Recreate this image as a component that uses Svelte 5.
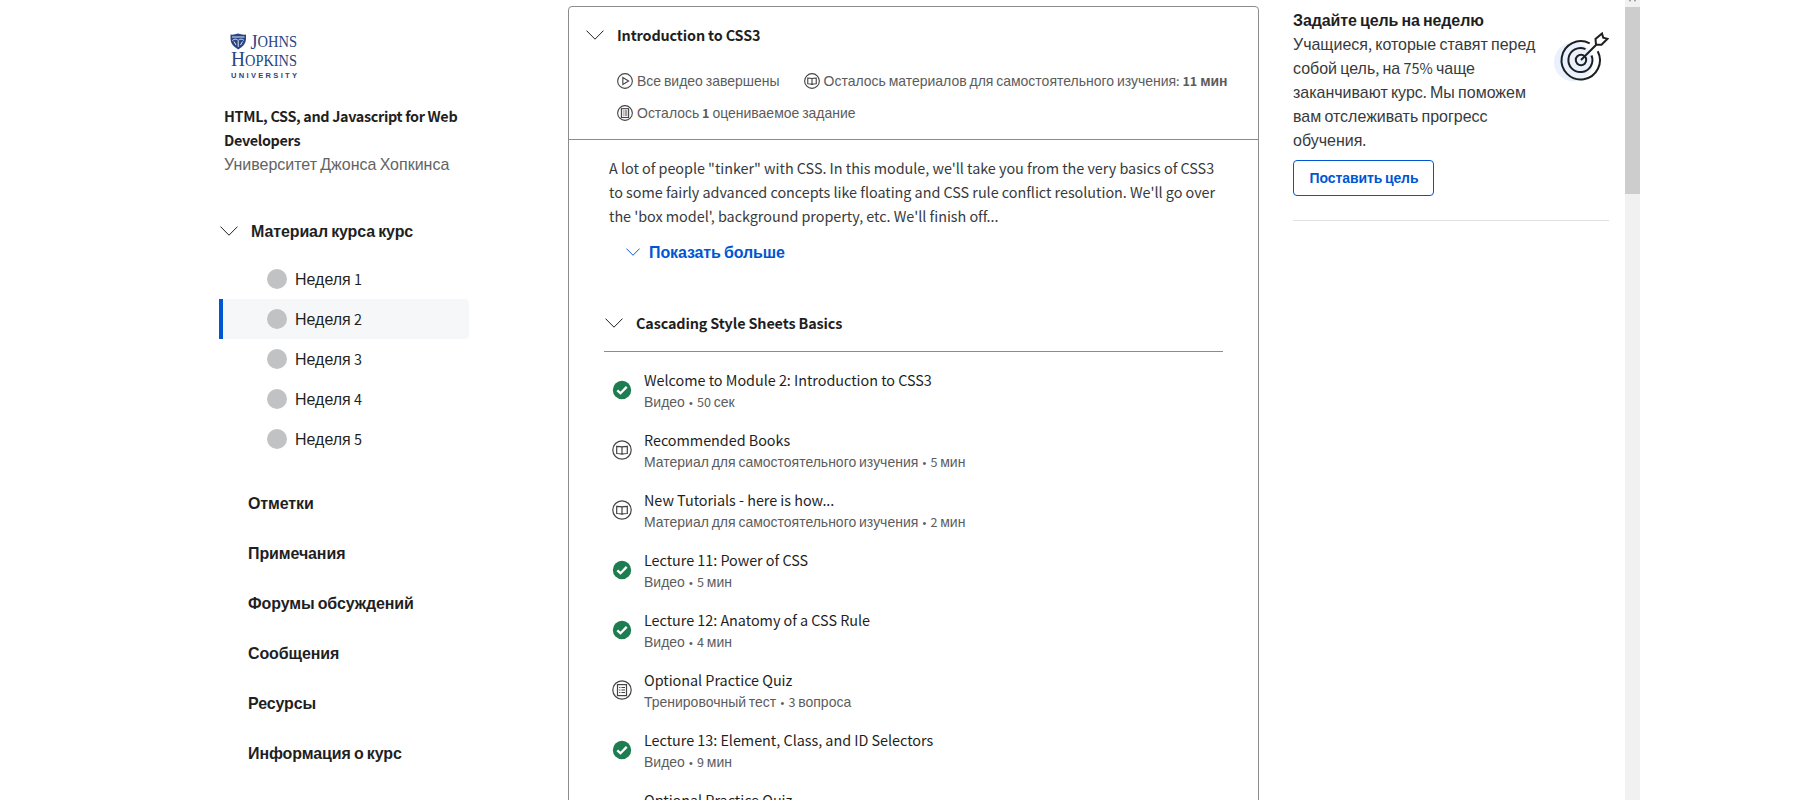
<script>
  const weeks = ['Неделя 1', 'Неделя 2', 'Неделя 3', 'Неделя 4', 'Неделя 5'];
  const activeWeek = 1;
  const links = ['Отметки', 'Примечания', 'Форумы обсуждений', 'Сообщения', 'Ресурсы', 'Информация о курс'];
  const reading = 'Материал для самостоятельного изучения';
  const items = [
    { icon: 'check', title: 'Welcome to Module 2: Introduction to CSS3', meta: 'Видео • 50 сек' },
    { icon: 'book', title: 'Recommended Books', meta: reading + ' • 5 мин' },
    { icon: 'book', title: 'New Tutorials - here is how...', meta: reading + ' • 2 мин' },
    { icon: 'check', title: 'Lecture 11: Power of CSS', meta: 'Видео • 5 мин' },
    { icon: 'check', title: 'Lecture 12: Anatomy of a CSS Rule', meta: 'Видео • 4 мин' },
    { icon: 'quiz', title: 'Optional Practice Quiz', meta: 'Тренировочный тест • 3 вопроса' },
    { icon: 'check', title: 'Lecture 13: Element, Class, and ID Selectors', meta: 'Видео • 9 мин' },
    { icon: 'quiz', title: 'Optional Practice Quiz', meta: '' }
  ];
  const description = [
    'A lot of people "tinker" with CSS. In this module, we\'ll take you from the very basics of CSS3',
    'to some fairly advanced concepts like floating and CSS rule conflict resolution. We\'ll go over',
    'the \'box model\', background property, etc. We\'ll finish off...'
  ];
  const goal = [
    'Учащиеся, которые ставят перед',
    'собой цель, на 75% чаще',
    'заканчивают курс. Мы поможем',
    'вам отслеживать прогресс',
    'обучения.'
  ];
  // Cyrillic runs and bullets use a different face from Latin letters, digits and punctuation
  const runs = (s) => s.split(/([А-Яа-яЁё]+|•)/).filter(Boolean);
  const isCyr = (s) => /[А-Яа-яЁё]/.test(s);
</script>

{#snippet t(s)}{#each runs(s) as r}{#if isCyr(r)}<span class="cy">{r}</span>{:else if r === '•'}<span class="cy dot">{r}</span>{:else}{r}{/if}{/each}{/snippet}

{#snippet chevron(w)}
  <svg class="chev" width={w} height={w / 2 + 1} viewBox="0 0 18 10" fill="none" stroke="currentColor" stroke-width={w < 18 ? 1.25 : 1}><path d="M.5 .6 9 9.2 17.5 .6" /></svg>
{/snippet}

{#snippet icon(kind, size)}
  <svg class="icon" width={size} height={size} viewBox="0 0 20 20" fill="none" stroke="#444" stroke-width={size < 20 ? 1.4 : 1.2}>
    {#if kind === 'check'}
      <circle cx="10" cy="10" r="9.2" fill="#1d7c50" stroke="none" />
      <path d="M5.3 10.3 8.5 13.2 14.7 6.9" stroke="#fff" stroke-width="2.3" />
    {:else}
      <circle cx="10" cy="10" r="9.2" />
      {#if kind === 'book'}
        <path d="M10 6.9C8.6 6.3 6.5 6.3 4.7 6.3V13.5C6.5 13.5 8.6 13.5 10 14.3C11.4 13.5 13.5 13.5 15.3 13.5V6.3C13.5 6.3 11.4 6.3 10 6.9ZV14.3" />
      {:else if kind === 'play'}
        <path d="M7.3 5.6V14.4L14.5 10Z" />
      {:else}
        <rect x="5.5" y="4.6" width="9" height="11" />
        <path d="M7.2 7.5H8.4M9.4 7.5H13M7.2 10H8.4M9.4 10H13M7.2 12.5H8.4M9.4 12.5H13" />
      {/if}
    {/if}
  </svg>
{/snippet}

<div class="page">
  <nav class="side">
    <svg class="logo" width="76" height="52" viewBox="0 0 76 52" fill="#2a4584">
      <path d="M1.5 5.5Q5 6 9 4.5Q13 6 17 5.5V10Q17 16 9.2 20.5Q1.5 16 1.5 10Z" />
      <path d="M3 8H15.5M3.3 11.5C6 9.5 7.5 10 9.2 11.5C11 10 13 9.5 15 11.5M5 12.5 7 16M13.500 12.5 11.5 16M9.2 12V18" fill="none" stroke="#dfe5f2" stroke-width="1" />
      <text x="21.5" y="20" font-size="20" textLength="7" lengthAdjust="spacingAndGlyphs">J</text>
      <text x="28.5" y="18.2" font-size="16.5" textLength="39.5" lengthAdjust="spacingAndGlyphs">OHNS</text>
      <text x="2" y="36.5" font-size="20" textLength="14" lengthAdjust="spacingAndGlyphs">H</text>
      <text x="16" y="36.5" font-size="16.5" textLength="52" lengthAdjust="spacingAndGlyphs">OPKINS</text>
      <text class="uni" x="2" y="48.5" font-size="7.5" textLength="66">UNIVERSITY</text>
    </svg>
    <div class="course">
      <div class="b name">HTML, CSS, and Javascript for Web</div>
      <div class="b name">Developers</div>
      <div class="school">{@render t('Университет Джонса Хопкинса')}</div>
    </div>
    <div class="material b">{@render chevron(18)}<span>{@render t('Материал курса курс')}</span></div>
    <div class="weeks">
      {#each weeks as w, i}
        <div class="week" class:active={i === activeWeek}><i></i><span>{@render t(w)}</span></div>
      {/each}
    </div>
    <div class="links b">
      {#each links as l}<div>{@render t(l)}</div>{/each}
    </div>
  </nav>

  <main class="card">
    <header>
      <div class="head b">{@render chevron(18)}<span>Introduction to CSS3</span></div>
      <div class="stats">
        <div class="stat">{@render icon('play', 16)}<span>{@render t('Все видео завершены')}</span></div>
        <div class="stat">{@render icon('book', 16)}<span>{@render t('Осталось материалов для самостоятельного изучения: ')}<b>{@render t('11 мин')}</b></span></div>
        <div class="stat">{@render icon('quiz', 16)}<span>{@render t('Осталось ')}<b>1</b>{@render t(' оцениваемое задание')}</span></div>
      </div>
    </header>
    <div class="desc">
      {#each description as d}<div>{d}</div>{/each}
    </div>
    <div class="more b">{@render chevron(14)}<span>{@render t('Показать больше')}</span></div>
    <div class="section b">{@render chevron(18)}<span>Cascading Style Sheets Basics</span></div>
    <div class="items">
      {#each items as it}
        <div class="item">
          {@render icon(it.icon, 20)}
          <div class="label">
            <div class="title">{it.title}</div>
            <div class="meta">{@render t(it.meta)}</div>
          </div>
        </div>
      {/each}
    </div>
  </main>

  <aside class="goal">
    <div class="goal-row">
      <div class="goal-text">
        <div class="b">{@render t('Задайте цель на неделю')}</div>
        {#each goal as g}<div>{@render t(g)}</div>{/each}
      </div>
      <svg class="target" width="58" height="54" viewBox="0 0 58 54" fill="none" stroke="#1f1f1f" stroke-width="2">
        <circle cx="22.5" cy="33" r="19.5" fill="#e8f1fd" stroke="none" />
        <path d="M38.7 14.3A19.2 19.2 0 1 0 46.7 22.3" />
        <path d="M34.5 20.2A12 12 0 1 0 40.5 26.5" />
        <circle cx="30" cy="31" r="5.2" />
        <path d="M30 31 45 16M45 15.5 44.5 10 51 4.5 52.2 8.6 56.5 9.8 50.5 15.8Z" />
      </svg>
    </div>
    <button class="b">{@render t('Поставить цель')}</button>
  </aside>

  <div class="scroll">
    <svg width="15" height="7" viewBox="0 0 15 7"><path d="M4 0H6L5 2ZM9 0H11L10 2Z" fill="#888" /></svg>
    <div class="thumb"></div>
  </div>
</div>

<style>
  :global(body) { background: #fff; overflow: hidden; }
  .page {
    display: flex;
    height: 800px;
    overflow: hidden;
    padding-left: 219px;
    box-sizing: border-box;
    font-family: "Noto Sans CJK SC", "Liberation Sans", sans-serif;
    font-size: 14.4px;
    line-height: 24px;
    color: #1f1f1f;
    white-space: nowrap;
  }
  svg { display: block; flex: none; }
  .b { font-weight: 700; letter-spacing: -0.1px; }
  .cy { font-family: "Liberation Sans", Arial, sans-serif; font-size: 1.1111em; line-height: 0; }
  .dot { font-size: .86em; margin: 0 1.35px; }

  .side { width: 250px; flex: none; padding-top: 29px; }
  .logo { margin-left: 10px; font-family: "Liberation Serif", serif; }
  .logo .uni { font-family: "Liberation Sans", sans-serif; font-weight: 700; }
  .course { padding: 23px 0 0 5px; }
  .name { letter-spacing: -0.34px; }
  .school { color: #636363; }
  .material { display: flex; align-items: center; gap: 13px; padding: 43px 0 0 1px; }
  .weeks { padding-top: 16px; }
  .week { display: flex; align-items: center; gap: 8px; height: 40px; padding-left: 48px; border-radius: 0 4px 4px 0; }
  .week.active { background: #f5f7f9; box-shadow: inset 4px 0 #0056d2; }
  .week i { width: 20px; height: 20px; border-radius: 50%; background: #c1c2c4; }
  .links { padding: 32px 0 0 29px; display: grid; gap: 26px; }

  .card { width: 689px; flex: none; height: 820px; margin: 6px 0 0 99px; border: 1px solid #8c8c8c; border-radius: 4px; }
  header { height: 132px; border-bottom: 1px solid #8c8c8c; }
  .head { display: flex; align-items: center; gap: 13px; padding: 16px 0 0 17px; letter-spacing: -0.14px; }
  .stats { display: flex; flex-wrap: wrap; column-gap: 24px; row-gap: 8px; padding: 22px 0 0 48px; font-size: 12.6px; color: #5c5c5c; }
  .stat { display: flex; align-items: center; gap: 4px; }
  .desc { padding: 16px 0 0 40px; color: #373a3c; letter-spacing: -0.03px; }
  .more { display: flex; align-items: center; gap: 9px; padding: 12px 0 0 57px; color: #0056d2; }
  .section { display: flex; align-items: center; gap: 13px; margin: 47px 35px 0 35px; padding: 0 0 16px 1px; border-bottom: 1px solid #8c8c8c; letter-spacing: -0.14px; }
  .items { padding: 16px 0 0 43px; }
  .item { display: flex; align-items: center; gap: 12px; height: 44px; margin-bottom: 16px; }
  .label { padding-top: 2px; }
  .title { line-height: 22px; letter-spacing: -0.03px; }
  .meta { height: 22px; line-height: 22px; font-size: 12.6px; color: #5c5c5c; }

  .goal { width: 316px; flex: none; margin: 8px 0 0 34px; height: 212px; border-bottom: 1px solid #e1e1e1; }
  .goal-row { display: flex; justify-content: space-between; }
  .goal-text { color: #373a3c; }
  .goal-text .b { color: #1f1f1f; }
  .target { margin: 21px 0 0; }
  button { display: block; margin-top: 8px; width: 141px; height: 36px; padding: 0 0 1px 1px; border: 1px solid #0056d2; border-radius: 4px; background: #fff; color: #0056d2; font-family: inherit; font-size: 12.6px; }

  .scroll { width: 15px; flex: none; margin-left: 16px; background: #f1f1f1; }
  .thumb { height: 187px; background: #cdcdcd; }
</style>
